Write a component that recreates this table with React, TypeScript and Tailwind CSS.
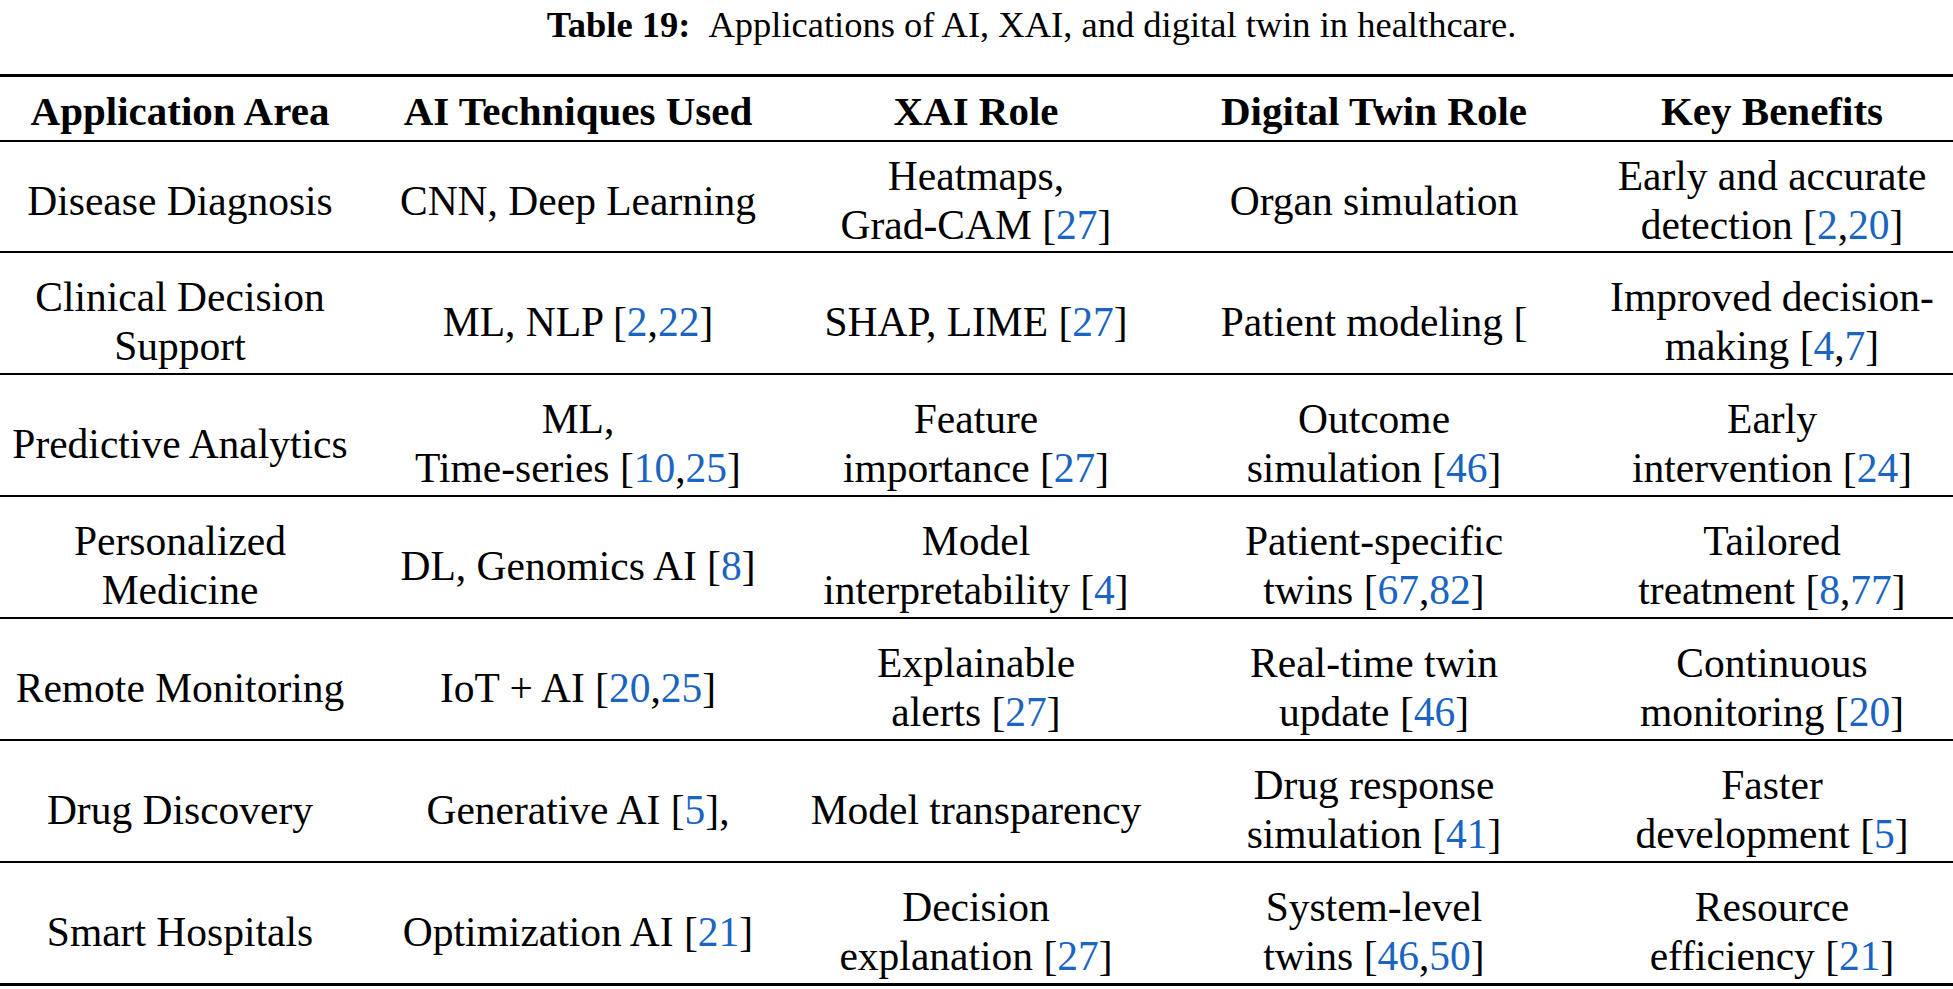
import React from "react";

const B = ({ children }: { children: React.ReactNode }) => (
  <span className="text-[#1a64c2]">{children}</span>
);

type Cell = React.ReactNode;

const rows: { cells: Cell[]; first?: boolean }[] = [
  {
    first: true,
    cells: [
      <>Disease Diagnosis</>,
      <>CNN, Deep Learning</>,
      <>
        Heatmaps,
        <br />
        Grad-CAM [<B>27</B>]
      </>,
      <>Organ simulation</>,
      <>
        Early and accurate
        <br />
        detection [<B>2</B>,<B>20</B>]
      </>,
    ],
  },
  {
    cells: [
      <>
        Clinical Decision
        <br />
        Support
      </>,
      <>
        ML, NLP [<B>2</B>,<B>22</B>]
      </>,
      <>
        SHAP, LIME [<B>27</B>]
      </>,
      <>Patient modeling [</>,
      <>
        Improved decision-
        <br />
        making [<B>4</B>,<B>7</B>]
      </>,
    ],
  },
  {
    cells: [
      <>Predictive Analytics</>,
      <>
        ML,
        <br />
        Time-series [<B>10</B>,<B>25</B>]
      </>,
      <>
        Feature
        <br />
        importance [<B>27</B>]
      </>,
      <>
        Outcome
        <br />
        simulation [<B>46</B>]
      </>,
      <>
        Early
        <br />
        intervention [<B>24</B>]
      </>,
    ],
  },
  {
    cells: [
      <>
        Personalized
        <br />
        Medicine
      </>,
      <>
        DL, Genomics AI [<B>8</B>]
      </>,
      <>
        Model
        <br />
        interpretability [<B>4</B>]
      </>,
      <>
        Patient-specific
        <br />
        twins [<B>67</B>,<B>82</B>]
      </>,
      <>
        Tailored
        <br />
        treatment [<B>8</B>,<B>77</B>]
      </>,
    ],
  },
  {
    cells: [
      <>Remote Monitoring</>,
      <>
        IoT + AI [<B>20</B>,<B>25</B>]
      </>,
      <>
        Explainable
        <br />
        alerts [<B>27</B>]
      </>,
      <>
        Real-time twin
        <br />
        update [<B>46</B>]
      </>,
      <>
        Continuous
        <br />
        monitoring [<B>20</B>]
      </>,
    ],
  },
  {
    cells: [
      <>Drug Discovery</>,
      <>
        Generative AI [<B>5</B>],
      </>,
      <>Model transparency</>,
      <>
        Drug response
        <br />
        simulation [<B>41</B>]
      </>,
      <>
        Faster
        <br />
        development [<B>5</B>]
      </>,
    ],
  },
  {
    cells: [
      <>Smart Hospitals</>,
      <>
        Optimization AI [<B>21</B>]
      </>,
      <>
        Decision
        <br />
        explanation [<B>27</B>]
      </>,
      <>
        System-level
        <br />
        twins [<B>46</B>,<B>50</B>]
      </>,
      <>
        Resource
        <br />
        efficiency [<B>21</B>]
      </>,
    ],
  },
];

const headers = [
  "Application Area",
  "AI Techniques Used",
  "XAI Role",
  "Digital Twin Role",
  "Key Benefits",
];

export default function App() {
  return (
    <div
      className="w-[1953px] h-[989px] overflow-hidden bg-white text-black text-[41.5px] leading-[49px]"
      style={{ fontFamily: '"Liberation Serif", "Times New Roman", serif' }}
    >
      <div className="h-[74px] pl-[110px] text-center text-[36.5px] leading-[49px]">
        <span className="font-bold">Table 19:</span>
        <span className="ml-[18px]">
          Applications of AI, XAI, and digital twin in healthcare.
        </span>
      </div>
      <div className="w-[1990px] -ml-[19px]">
        <div className="h-[3px] bg-black" />
        <div className="grid grid-cols-5 pt-[10px] pb-[4px] font-bold text-center text-[41px]">
          {headers.map((h) => (
            <div key={h}>{h}</div>
          ))}
        </div>
        <div className="h-[2px] bg-black" />
        {rows.map((r, i) => (
          <div key={i}>
            <div
              className={
                r.first
                  ? "grid grid-cols-5 pt-[10px] pb-[1px] text-center"
                  : "grid grid-cols-5 pt-[20px] pb-[2px] text-center"
              }
            >
              {r.cells.map((c, j) => (
                <div key={j} className="h-[98px] flex items-center justify-center">
                  <div>{c}</div>
                </div>
              ))}
            </div>
            <div className={i === rows.length - 1 ? "h-[3px] bg-black" : "h-[2px] bg-black"} />
          </div>
        ))}
      </div>
    </div>
  );
}
